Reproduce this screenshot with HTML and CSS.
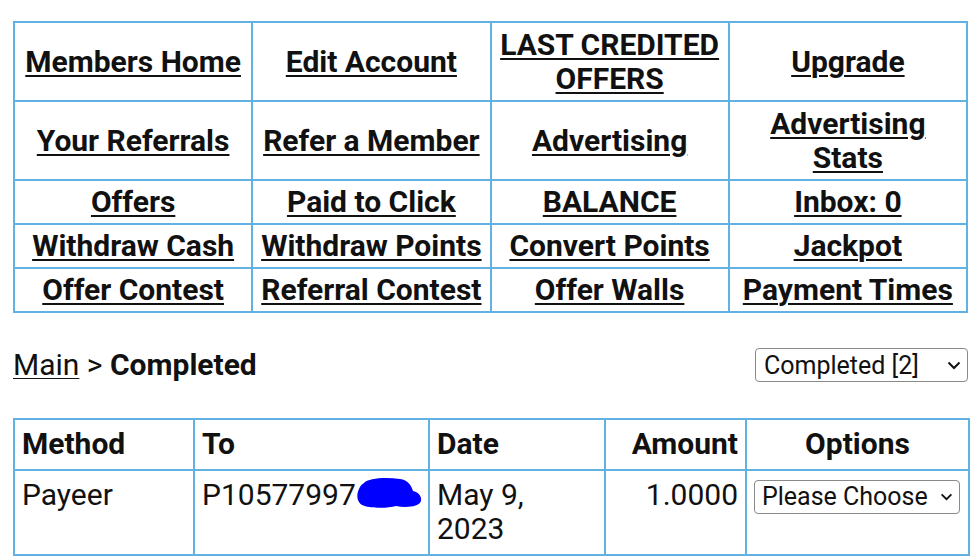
FILE: index.html
```html
<!DOCTYPE html>
<html lang="en">
<head>
    <meta charset="UTF-8">
    <meta name="viewport" content="width=device-width, initial-scale=1.0">
    <title>Completed</title>
    <link rel="stylesheet" href="styles.css">
</head>
<body>
    <table class="menu">
        <tr class="tall">
            <td><a href="#">Members Home</a></td>
            <td><a href="#">Edit Account</a></td>
            <td><a href="#">LAST CREDITED OFFERS</a></td>
            <td><a href="#">Upgrade</a></td>
        </tr>
        <tr class="tall">
            <td><a href="#">Your Referrals</a></td>
            <td><a href="#">Refer a Member</a></td>
            <td><a href="#">Advertising</a></td>
            <td><a href="#">Advertising Stats</a></td>
        </tr>
        <tr>
            <td><a href="#">Offers</a></td>
            <td><a href="#">Paid to Click</a></td>
            <td><a href="#">BALANCE</a></td>
            <td><a href="#">Inbox: 0</a></td>
        </tr>
        <tr>
            <td><a href="#">Withdraw Cash</a></td>
            <td><a href="#">Withdraw Points</a></td>
            <td><a href="#">Convert Points</a></td>
            <td><a href="#">Jackpot</a></td>
        </tr>
        <tr>
            <td><a href="#">Offer Contest</a></td>
            <td><a href="#">Referral Contest</a></td>
            <td><a href="#">Offer Walls</a></td>
            <td><a href="#">Payment Times</a></td>
        </tr>
    </table>

    <div class="crumbs">
        <div><a href="#" class="plain">Main</a> &gt; <b>Completed</b></div>
        <span class="select-wrap status">
            <select>
                <option>Completed [2]</option>
            </select>
            <svg class="chev" viewBox="0 0 14 9" width="14" height="9"><path d="M1.5 1.5 L7 7 L12.5 1.5" fill="none" stroke="#111" stroke-width="2"/></svg>
        </span>
    </div>

    <table class="list">
        <colgroup>
            <col style="width: 180px">
            <col style="width: 235px">
            <col style="width: 176px">
            <col style="width: 141px">
            <col style="width: 223px">
        </colgroup>
        <tr>
            <th>Method</th>
            <th>To</th>
            <th>Date</th>
            <th class="right">Amount</th>
            <th class="center">Options</th>
        </tr>
        <tr>
            <td>Payeer</td>
            <td class="to">P10577997<svg class="blot" viewBox="0 0 66 32" width="66" height="32"><path d="M8 6 C12 1 30 0 44 2 C52 3 55 8 57 14 C62 15 66 19 65 24 C63 30 50 31 40 29 C30 32 12 31 6 28 C1 25 0 18 3 12 C4 9 6 7 8 6 Z" fill="#0000ff"/></svg></td>
            <td>May 9, 2023</td>
            <td class="right">1.0000</td>
            <td>
                <span class="select-wrap choose">
                    <select>
                        <option>Please Choose</option>
                    </select>
                    <svg class="chev" viewBox="0 0 14 9" width="13" height="8"><path d="M1.5 1.5 L7 7 L12.5 1.5" fill="none" stroke="#111" stroke-width="2"/></svg>
                </span>
            </td>
        </tr>
    </table>
</body>
</html>
```

FILE: styles.css
```css
body {
    margin: 0;
    padding: 21px 2px 0 13px;
    font-family: Roboto, "Liberation Sans", Arial, sans-serif;
    font-size: 30px;
    line-height: 34px;
    color: #111;
    background: #fff;
}

a {
    color: #111;
    text-decoration: underline;
    text-decoration-thickness: 2px;
    text-underline-offset: 3px;
}

.menu {
    width: 955px;
    table-layout: fixed;
    border-collapse: collapse;
}

.menu td {
    border: 2px solid #62b1e3;
    text-align: center;
    padding: 4px 2px;
    font-weight: bold;
}

.menu tr.tall td {
    height: 69px;
}

.crumbs {
    display: flex;
    justify-content: space-between;
    align-items: center;
    margin-top: 35px;
    height: 34px;
}

.crumbs a.plain {
    text-decoration-thickness: 1px;
}

.select-wrap {
    position: relative;
    display: inline-block;
}

.select-wrap select {
    appearance: none;
    font-family: Roboto, "Liberation Sans", Arial, sans-serif;
    font-size: 25px;
    color: #111;
    background: #fff;
    border: 1px solid #8a8a8a;
    border-radius: 4px;
    height: 34px;
    padding: 0 30px 0 8px;
    display: block;
}

.select-wrap .chev {
    position: absolute;
    top: 13px;
    pointer-events: none;
}

.status select {
    width: 213px;
}

.status .chev {
    right: 7px;
}

.choose select {
    width: 206px;
    padding-left: 7px;
}

.choose .chev {
    right: 7px;
}

.list {
    margin-top: 36px;
    width: 955px;
    table-layout: fixed;
    border-collapse: collapse;
}

.list th,
.list td {
    border: 2px solid #62b1e3;
    padding: 7px 7px 8px;
    text-align: left;
    vertical-align: top;
}

.list th {
    font-weight: bold;
}

.list .right { text-align: right; }
.list .center { text-align: center; }

.list td.to {
    position: relative;
}

.blot {
    position: absolute;
    left: 161px;
    top: 6px;
}
```
